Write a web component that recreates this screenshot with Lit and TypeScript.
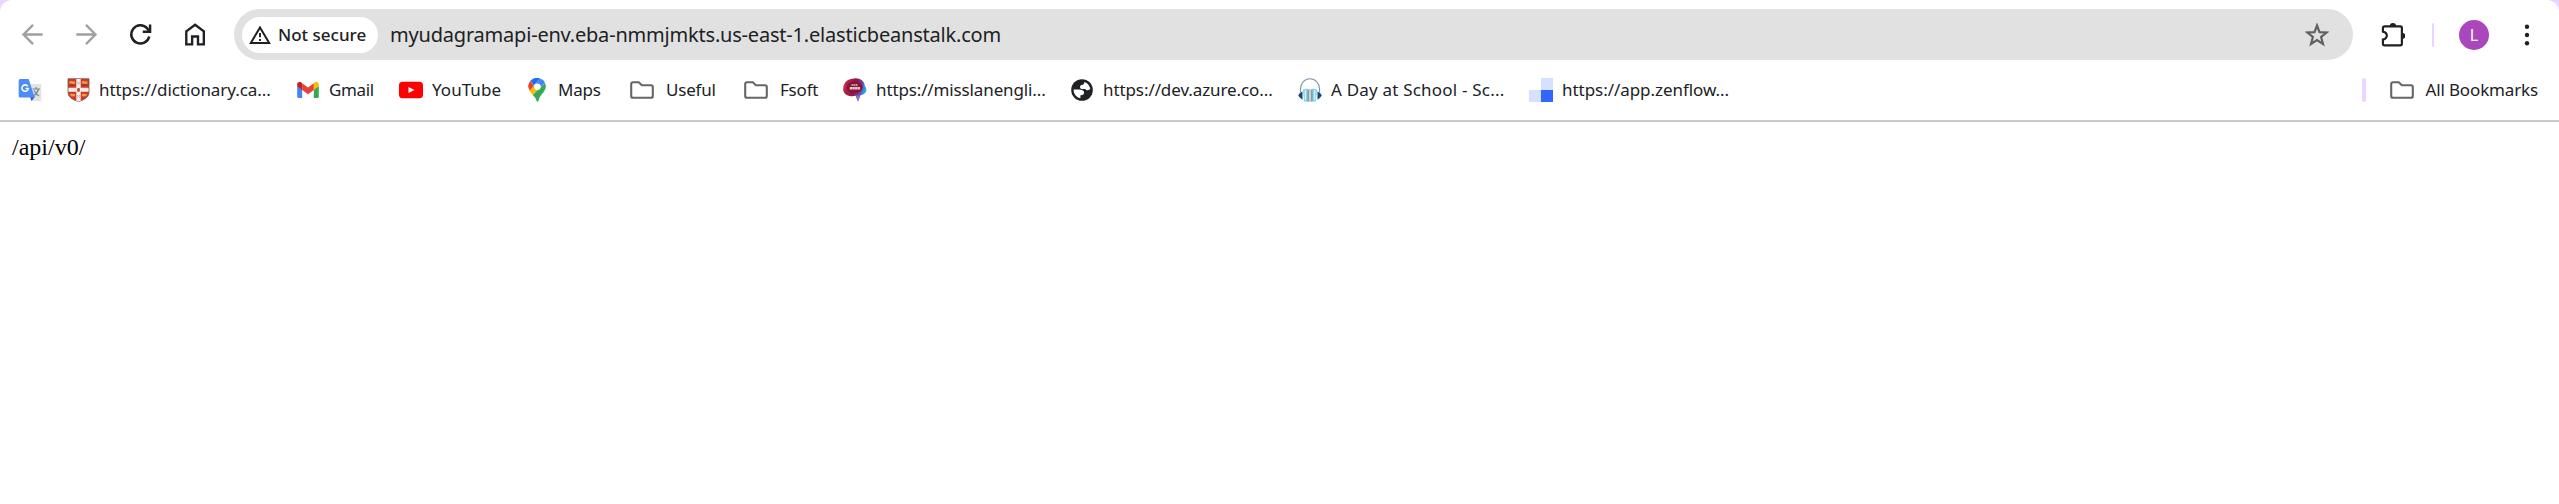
import { LitElement, html, svg, css } from "lit";
import { customElement } from "lit/decorators.js";

const icon = (body: unknown, size = 24) =>
  html`<svg width=${size} height=${size} viewBox="0 0 24 24" fill="none">${body}</svg>`;

const folder = svg`<path d="M3 4.2h5.8l3 3H21a1.8 1.8 0 0 1 1.8 1.8v9a1.8 1.8 0 0 1-1.8 1.8H3A1.8 1.8 0 0 1 1.2 18V6A1.8 1.8 0 0 1 3 4.2Z" stroke="#666" stroke-width="2.1"/>`;

const translate = svg`<path d="M12 6h10.500a.8.8 0 0 1 .8.8v15.400a.8.8 0 0 1-.8.8H13Z" fill="#e1e3e5"/><path d="M14.500 11h7.500M18.200 9v2M20.500 11c-.8 3-2.500 5.500-5.200 7M16 12.500c1 2.500 2.800 4.300 5 5.500" stroke="#75878f" stroke-width="1.200"/><path d="M12 18.500h5.200L13.500 23Z" fill="#3b4fc0"/><path d="M2.200 1h8.500l6 18.500H2.200A1.500 1.500 0 0 1 .7 18V2.500A1.500 1.500 0 0 1 2.200 1Z" fill="#4b8df5"/><path d="M9.700 8.200A3.200 3.200 0 1 0 10.300 10.500H7.500" stroke="#fff" stroke-width="1.600"/>`;

const shield = svg`<path d="M2 .8h21v13c0 5.500-4.500 8-10.500 9.800C6.500 21.800 2 19.300 2 13.800Z" fill="#d9342b" stroke="#765044" stroke-width=".8"/><path d="M10.300 1h4.400v22l-2.200.6-2.200-.6ZM2.400 9.700h20.200v4H2.400Z" fill="#f1efec"/><path d="M3.500 3.200c2-1 3 .8 5.500 0v2.200c-2 1.300-3.500-.5-5.500.5ZM16 3.200c2-1 3 .8 5.500 0v2.200c-2 1.300-3.500-.5-5.500.5ZM4 16c2-1 3 .5 5 0v2c-1.500 1-2.500 0-4 .5ZM16 16c2-1 3 .5 5 0l-1 2.500c-1.500-.5-2.500.5-4-.5Z" fill="#e5a33a"/><path d="M3.500 7.200h5.500M16 7.200h5.500" stroke="#8d3b22" stroke-width="1.200"/><path d="M11 11.800h3M12.500 10v4" stroke="#d64a3a" stroke-width="2"/><path d="M11 3.500l3 3M14 3.500l-3 3M11 17l3 3M14 17l-3 3" stroke="#a9b2b1" stroke-width=".9"/>`;

const gmail = svg`<path d="M1.200 8v10.500A1.500 1.500 0 0 0 2.700 20H6.200V11Z" fill="#4285f4"/><path d="M22.800 8v10.500a1.500 1.500 0 0 1-1.500 1.500H17.800V11Z" fill="#34a853"/><path d="M17.800 5.200V12l5-3.800V6.200c0-2.100-2.400-3.100-3.900-1.900Z" fill="#fbbc04"/><path d="M6.200 12V5.200L12 9.500l5.800-4.300V12L12 16.300Z" fill="#ea4335"/><path d="M1.200 6.200v2L6.200 12V5.200L5.100 4.300C3.600 3.100 1.200 4.100 1.200 6.200Z" fill="#c5221f"/>`;

const youtube = svg`<rect y="3.700" width="24" height="16.600" rx="3.600" fill="#f00"/><path d="M9.500 8.900v6.200l6-3.100Z" fill="#fff"/>`;

const maps = svg`<path d="M5.500 2.800A8.700 8.700 0 0 1 15 .5L8.800 7.600Z" fill="#1a73e8"/><path d="M15 .5c2.500.8 4.200 2.500 5 4.500L12 12 8.800 7.600Z" fill="#4285f4"/><path d="M5.500 2.800A8.500 8.500 0 0 0 4.800 13L9 8.200Z" fill="#ea4335"/><path d="M4.600 12.500c.7 1.500 2 3 3.100 4.500L15 9.700 9.500 7Z" fill="#fbbc04"/><path d="M20 5c1.500 3 .7 6-1 8.600-2.500 3.600-4.600 5-5.300 8.700-.5 1.900-1.900 1.900-2.400 0-.6-2.200-1.700-3.500-3.600-5.300Z" fill="#34a853"/><circle cx="12.400" cy="8.700" r="3.300" fill="#fff"/>`;

const speech = svg`<defs><linearGradient id="bubble" x2="1" y2=".3"><stop stop-color="#ff5a35"/><stop offset=".2" stop-color="#b52055"/><stop offset=".55" stop-color="#8c1841"/><stop offset=".8" stop-color="#793ba0"/><stop offset="1" stop-color="#20a7ef"/></linearGradient></defs><path d="M11.500.4C17 0 21.700 3 21.800 8c3.300 3.500 1.400 8-4.300 9.300L15 23.400l-2.400-5.600C6.500 19.500-.5 16.500.2 10.400.4 4 5 .4 11.500.4Z" fill="url(#bubble)"/><path d="M13 17.500l2 5.900 2.500-6.200Z" fill="#8970cb"/><ellipse cx="11.700" cy="9.300" rx="8" ry="6" fill="#881536"/><path d="M8.500 7h6.500" stroke="#e5b9ca" stroke-width="1.500" stroke-dasharray="1.700 .4"/><path d="M6.800 10.300h10.400" stroke="#ead2dc" stroke-width="2.500" stroke-dasharray="2.300 .35"/>`;

const globe = svg`<circle cx="12" cy="12" r="10.800" fill="#202124"/><path d="M3.600 11.600h5.200c3.300 0 5.300 1.100 5.300 3.200 0 1.800-1.500 2.600-3.700 2.500v3C6.400 19.700 3.500 16.100 3.600 11.600Z" fill="#fff"/><path d="M14.300 3.900c3.100.9 5.400 3.500 6 6.700-.8 1.900-3.600 2.500-5 .3h-3.600c-2.100 0-2.300-3.200-.1-3.800 2-.4 2.700-1.500 2.700-3.200Z" fill="#fff"/>`;

const headphones = svg`<path d="M2.500 14V11a9.500 10.300 0 0 1 19 0v3" stroke="#7b96b4" stroke-width="1.100"/><path d="M4.500 13.500v8.200L2 19.800.2 17.500 2 14.800ZM19.500 13.500v8.200l2.500-1.900 1.800-2.300L22 14.800Z" fill="#174a7c"/><path d="M5 11.500l4.700-1 .8 13H6ZM19 11.500l-4.700-1-.8 13H18Z" fill="#70d3f3"/><path d="M9.500 11.500h5v12h-5Z" fill="#8799a6"/><path d="M12 12v11M7.400 12v10M16.600 12v10" stroke="#ece8dc" stroke-width="1.500"/>`;

const zenflow = svg`<path d="M12 0h12v12H12ZM0 12h12v12H0Z" fill="#d6e0ff"/><path d="M12 12h12v12H12Z" fill="#3366ff"/>`;

interface Bookmark {
  art: unknown;
  label: string;
  span: number;
  gap: number;
  tracking: number;
}

const bookmarks: Bookmark[] = [
  { art: translate, label: "", span: 48, gap: 0, tracking: 0 },
  { art: shield, label: "https://dictionary.ca...", span: 230, gap: 9, tracking: -0.07 },
  { art: gmail, label: "Gmail", span: 103, gap: 9, tracking: -0.35 },
  { art: youtube, label: "YouTube", span: 126, gap: 9, tracking: 0.05 },
  { art: maps, label: "Maps", span: 105, gap: 9, tracking: -0.2 },
  { art: folder, label: "Useful", span: 114, gap: 12, tracking: -0.2 },
  { art: folder, label: "Fsoft", span: 99, gap: 12, tracking: -0.2 },
  { art: speech, label: "https://misslanengli...", span: 227, gap: 9, tracking: -0.13 },
  { art: globe, label: "https://dev.azure.co...", span: 228, gap: 9, tracking: -0.09 },
  { art: headphones, label: "A Day at School - Sc...", span: 231, gap: 9, tracking: 0.2 },
  { art: zenflow, label: "https://app.zenflow...", span: 210, gap: 9, tracking: -0.05 },
];

@customElement("app-root")
export class AppRoot extends LitElement {
  static styles = css`
    :host { display: block; height: 504px; background: #fff; color: #202124; font-family: "Noto Sans", "Open Sans", sans-serif; overflow: hidden; }
    svg { display: block; flex: none; }
    .frame { background: #e9d5ff; }
    .chrome { height: 120px; background: #fff; border-radius: 12px 12px 0 0; border-bottom: 2px solid #c9c9c9; }
    .toolbar { display: flex; align-items: center; height: 69px; box-sizing: border-box; padding-left: 19px; }
    .nav { display: flex; gap: 27px; width: 215px; flex: none; }
    .omnibox { display: flex; align-items: center; box-sizing: border-box; width: 2119px; height: 51px; border-radius: 26px; background: #e1e1e1; padding: 0 24px 0 8px; flex: none; }
    .chip { display: flex; align-items: center; box-sizing: border-box; width: 136px; height: 36px; border-radius: 18px; background: #fff; padding-left: 6px; gap: 6px; font-size: 17px; font-weight: 500; white-space: nowrap; letter-spacing: 0; }
    .url { margin-left: 12px; flex: 1; font-size: 20px; line-height: 30px; letter-spacing: -0.2px; white-space: nowrap; }
    .tools { display: flex; align-items: center; padding-left: 27px; }
    .rule { width: 2px; height: 24px; background: #e9d5ff; border-radius: 1px; margin-left: 27px; }
    .avatar { width: 30px; height: 30px; border-radius: 50%; background: #ab47bc; color: #fff; font-size: 16px; line-height: 30px; text-align: center; margin: 0 26px 0 25px; }
    .bar { display: flex; align-items: center; height: 42px; padding-left: 18px; font-size: 17px; line-height: 24px; }
    .bookmark { display: flex; align-items: center; flex: none; white-space: nowrap; }
    .all { margin-left: auto; margin-right: 21px; gap: 12px; letter-spacing: -0.15px; }
    .split { width: 4px; height: 24px; border-radius: 2px; background: #e9d5ff; margin-right: 12px; }
    .page { padding: 11px 12px; font: 24px/28px "Liberation Serif", serif; color: #000; }
  `;

  render() {
    return html`
      <div class="frame"><div class="chrome">
        <div class="toolbar">
          <div class="nav">
            ${icon(svg`<path d="M21 12H4.500M12.500 3.500L4 12l8.500 8.500" stroke="#a0a0a0" stroke-width="2.100"/>`, 27)}
            ${icon(svg`<path d="M3 12h16.500M11.500 3.500L20 12l-8.500 8.500" stroke="#a0a0a0" stroke-width="2.100"/>`, 27)}
            ${icon(svg`<path d="M19.800 13.800A8.100 8.100 0 1 1 18 6.600L19.700 8.700M20.500 3v6.500h-6.500" stroke="#202124" stroke-width="2.200"/>`, 27)}
            ${icon(svg`<path d="M4.700 9.200L12.500 3.300l7.800 5.900v11.600h-5.200v-7H9.900v7H4.700Z" stroke="#202124" stroke-width="2.100"/>`, 27)}
          </div>
          <div class="omnibox">
            <div class="chip">
              ${icon(svg`<path d="M12 4.400L21.200 20H2.800Z" stroke="#202124" stroke-width="2"/><path d="M12 10v4.300M12 16v2.100" stroke="#202124" stroke-width="1.900"/>`)}
              <span>Not secure</span>
            </div>
            <span class="url">myudagramapi-env.eba-nmmjmkts.us-east-1.elasticbeanstalk.com</span>
            ${icon(svg`<path d="M12 2.500l2.500 6.700 7.200.3-5.600 4.500 1.900 7L12 17l-6 4 1.900-7-5.600-4.500 7.200-.3Z" stroke="#606164" stroke-width="2.200"/>`)}
          </div>
          <div class="tools">
            ${icon(svg`<path d="M4.300 4.200h15.200a1.500 1.500 0 0 1 1.500 1.500v15.200a1.500 1.500 0 0 1-1.500 1.500H4.300a1.500 1.500 0 0 1-1.500-1.500v-4c5-1 5-6.700 0-7.700V5.700a1.500 1.500 0 0 1 1.500-1.500Z" stroke="#202124" stroke-width="2.100"/><path d="M9.400 4a3 3 0 0 1 6 0ZM21.500 10.600a2.800 2.800 0 0 1 0 5.600Z" fill="#202124"/>`, 25)}
            <div class="rule"></div>
            <div class="avatar">L</div>
            ${icon(svg`<circle cx="12" cy="3.700" r="2.200" fill="#202124"/><circle cx="12" cy="12" r="2.200" fill="#202124"/><circle cx="12" cy="20.300" r="2.200" fill="#202124"/>`)}
          </div>
        </div>
        <div class="bar">
          ${bookmarks.map((b) => html`<div class="bookmark" style="width:${b.span}px;gap:${b.gap}px;letter-spacing:${b.tracking}px">${icon(b.art)}<span>${b.label}</span></div>`)}
          <div class="bookmark all"><div class="split"></div>${icon(folder)}<span>All Bookmarks</span></div>
        </div>
      </div></div>
      <div class="page">/api/v0/</div>
    `;
  }
}
